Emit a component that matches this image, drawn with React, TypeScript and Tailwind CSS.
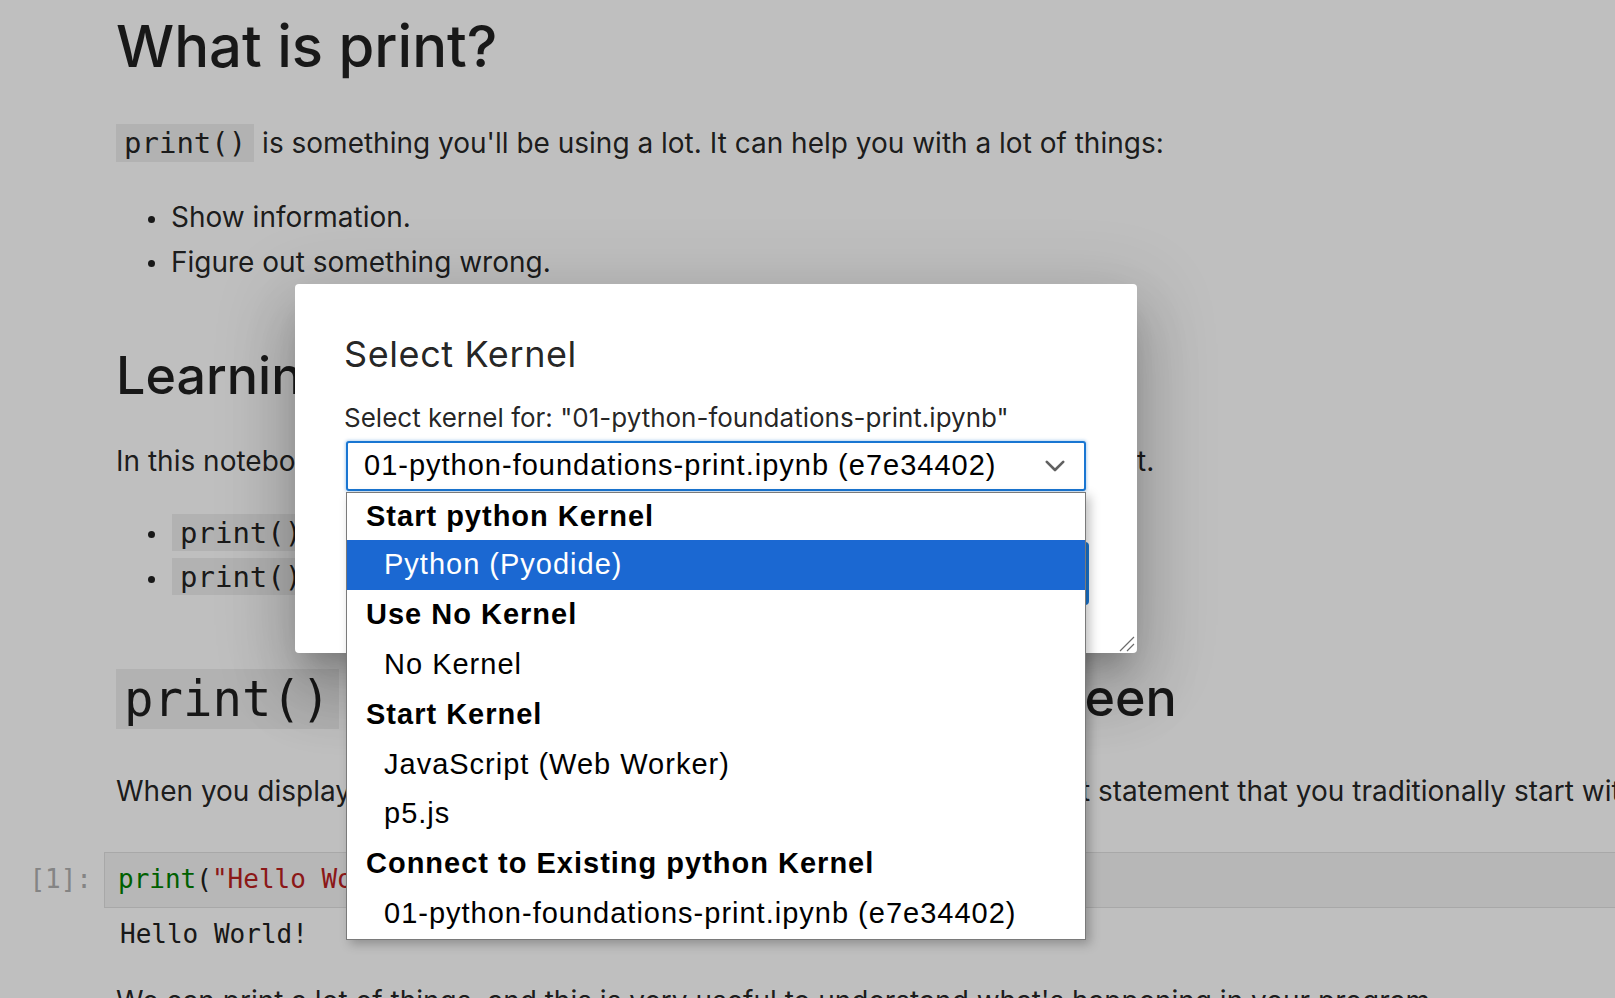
import type { ReactNode } from 'react'

const mono = "font-['DejaVu_Sans_Mono',monospace]"
const sysSans = "font-['Liberation_Sans',Arial,sans-serif] tracking-[1px]"

function Code({ children, size = 'text-[29px]', pad = 'py-[1.6px]' }: { children: ReactNode; size?: string; pad?: string }) {
  return <code className={`${mono} ${size} ${pad} bg-[#eeeeee] px-[8px]`}>{children}</code>
}

function Dot({ mr = 'mr-[16px]' }: { mr?: string }) {
  return <span className={`ml-[32px] inline-block h-[7px] w-[7px] rounded-full bg-[rgba(0,0,0,0.87)] align-middle ${mr}`} />
}

function Notebook() {
  return (
    <div className="w-[1700px]">
      <div className="pl-[116px]">
        <h1 className="mt-[16px] text-[58px] leading-[60px] font-medium">What is print?</h1>
        <p className="mt-[45px] text-[28px] leading-[45px]">
          <Code>print()</Code> is something you'll be using a lot. It can help you with a lot of things:
        </p>
        <ul className="mt-[29px] text-[28px] leading-[44.5px]">
          <li><Dot />Show information.</li>
          <li><Dot />Figure out something wrong.</li>
        </ul>

        <h2 className="mt-[62px] text-[52px] leading-[60px] font-medium">Learning Objectives</h2>
        <p className="mt-[32.6px] text-[28px] leading-[45px]">
          In this notebook you will learn how to use the print() function to display output.
        </p>
        <ul className="mt-[26.6px] text-[28px] leading-[44.5px]">
          <li><Dot mr="mr-[17px]" /><Code>print()</Code> with text</li>
          <li><Dot mr="mr-[17px]" /><Code>print()</Code> with numbers</li>
        </ul>

        <h2 className="mt-[68.6px] text-[52px] leading-[60px] font-medium">
          <Code size="text-[49px]" pad="py-[1.5px]">print()</Code> Shows Information on the Screen
        </h2>
        <p className="mt-[38.8px] whitespace-nowrap text-[28px] leading-[45px]">
          When you display "Hello World!" on your screen, it is usually the very first statement that you traditionally start with when learning a new programming language.
        </p>
      </div>

      <div className={`mt-[38px] flex ${mono} text-[26px] leading-[34px]`}>
        <div className="w-[104px] shrink-0 pr-[12px] pt-[10px] text-right text-[#b0b0b0]">[1]:</div>
        <div className="w-[1560px] border border-[#e0e0e0] bg-[#f5f5f5] pb-[11px] pl-[13px] pt-[9px] text-[#212121]">
          <span className="text-[#008000]">print</span>(<span className="text-[#ba2121]">"Hello World!"</span>)
        </div>
      </div>
      <div className={`ml-[104px] mt-[9px] pl-[16px] ${mono} text-[26px] leading-[34px] text-[#212121]`}>Hello World!</div>

      <p className="ml-[116px] mt-[28.7px] whitespace-nowrap text-[28px] leading-[45px]">
        We can print a lot of things, and this is very useful to understand what's happening in your program.
      </p>
    </div>
  )
}

const groups = [
  { label: 'Start python Kernel', options: ['Python (Pyodide)'] },
  { label: 'Use No Kernel', options: ['No Kernel'] },
  { label: 'Start Kernel', options: ['JavaScript (Web Worker)', 'p5.js'] },
  { label: 'Connect to Existing python Kernel', options: ['01-python-foundations-print.ipynb (e7e34402)'] },
]

function KernelDialog() {
  return (
    <div className="absolute left-[295px] top-[284px] h-[369px] w-[842px] rounded-[4px] bg-white pl-[49px] pr-[48px] pt-[49px] shadow-[0_20px_26px_-12px_rgba(0,0,0,0.2),0_40px_62px_6px_rgba(0,0,0,0.14),0_16px_76px_14px_rgba(0,0,0,0.12)]">
      <h2 className="text-[36px] leading-[42px] tracking-[0.6px]">Select Kernel</h2>
      <label className="mt-[27.6px] block text-[26px] leading-[30px]">
        Select kernel for: "01-python-foundations-print.ipynb"
      </label>

      <div className="relative ml-[2px] mt-[8.4px] w-[740px]">
        <div className="flex h-[50px] items-center justify-between rounded-[3px] border-2 border-[#1976d2] bg-white pl-[16px] pr-[19px] shadow-[0_0_3px_1px_rgba(25,118,210,0.3)]">
          <span className={`${sysSans} mb-[1px] text-[29px] leading-[41px] text-black`}>
            01-python-foundations-print.ipynb (e7e34402)
          </span>
          <svg width="20" height="12" viewBox="0 0 20 12" fill="none">
            <path d="M1.8 1.8 L10 10 L18.2 1.8" stroke="#616161" strokeWidth="2.6" strokeLinecap="round" strokeLinejoin="round" />
          </svg>
        </div>

        <div className={`absolute left-0 top-[51px] z-10 w-[740px] border border-[#7a7a7a] bg-white text-[29px] text-black shadow-[4px_4px_10px_rgba(0,0,0,0.25)] ${sysSans}`}>
          {groups.map((g, gi) => (
            <div key={g.label}>
              <div className={`pl-[19px] font-bold ${gi === 0 ? 'h-[47.5px] leading-[47.5px]' : 'h-[49.8px] leading-[49.8px]'}`}>{g.label}</div>
              {g.options.map((o, oi) => (
                <div
                  key={o}
                  className={`h-[49.8px] pl-[37px] leading-[49.8px] ${gi === 0 && oi === 0 ? 'bg-[#1b68d2] text-white' : ''}`}
                >
                  {o}
                </div>
              ))}
            </div>
          ))}
        </div>
      </div>

      <div className="mt-[51px] flex justify-end gap-[16px]">
        <button className="h-[63px] w-[150px] rounded-[4px] bg-[#757575] text-[25px] text-white">Cancel</button>
        <button className="h-[63px] w-[150px] rounded-[4px] bg-[#1976d2] text-[25px] text-white">Select</button>
      </div>

      <svg className="absolute bottom-[1px] right-[2px]" width="16" height="16" viewBox="0 0 16 16" fill="none">
        <path d="M1 15 L15 1 M8 15 L15 8" stroke="#6b6b6b" strokeWidth="1.2" />
      </svg>
    </div>
  )
}

export default function App() {
  return (
    <div className="relative h-[998px] w-full overflow-hidden bg-white font-['Inter',sans-serif] text-[rgba(0,0,0,0.87)]">
      <Notebook />
      <div className="absolute inset-0 bg-black/25" />
      <KernelDialog />
    </div>
  )
}
